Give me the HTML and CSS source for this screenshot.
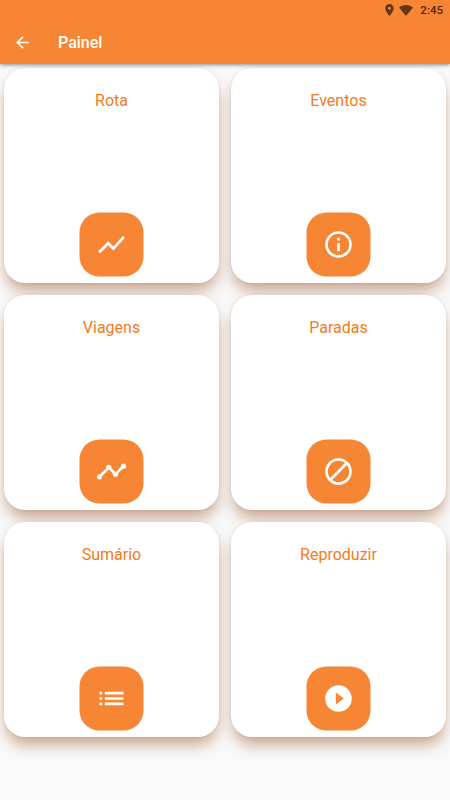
FILE: index.html
```html
<!DOCTYPE html>
<html lang="pt">
<head>
    <meta charset="UTF-8">
    <meta name="viewport" content="width=device-width, initial-scale=1.0">
    <title>Painel</title>
    <link rel="stylesheet" href="styles.css">
</head>
<body>
    <header class="app-header">
        <div class="status-bar">
            <svg class="status-pin" viewBox="5 2 14 20"><path d="M12 2C8.130 2 5 5.130 5 9c0 5.250 7 13 7 13s7-7.750 7-13c0-3.870-3.130-7-7-7zm0 9.500a2.500 2.500 0 0 1 0-5 2.500 2.500 0 0 1 0 5z"/></svg>
            <svg class="status-wifi" viewBox="0 0 14 11"><path d="M7 11L0 2.400C1.800.9 4.200 0 7 0s5.200.9 7 2.400z"/></svg>
            <span class="status-time">2:45</span>
        </div>
        <div class="toolbar">
            <a href="#" class="back-button" aria-label="Voltar">
                <svg viewBox="0 0 24 24"><path d="M20 11H7.830l5.590-5.590L12 4l-8 8 8 8 1.410-1.410L7.830 13H20v-2z"/></svg>
            </a>
            <h1 class="toolbar-title">Painel</h1>
        </div>
    </header>

    <main class="card-grid">
        <div class="card">
            <div class="card-title">Rota</div>
            <div class="card-icon">
                <svg viewBox="0 0 24 24"><path d="M3.500 18.490l6-6.010 4 4L22 6.920l-1.410-1.410-7.090 7.970-4-4L2 16.990z"/></svg>
            </div>
        </div>
        <div class="card">
            <div class="card-title">Eventos</div>
            <div class="card-icon">
                <svg viewBox="0 0 24 24"><path d="M11 7h2v2h-2zm0 4h2v6h-2zm1-9C6.480 2 2 6.480 2 12s4.480 10 10 10 10-4.480 10-10S17.520 2 12 2zm0 18c-4.410 0-8-3.590-8-8s3.590-8 8-8 8 3.590 8 8-3.590 8-8 8z"/></svg>
            </div>
        </div>
        <div class="card">
            <div class="card-title">Viagens</div>
            <div class="card-icon">
                <svg viewBox="0 0 24 24"><path d="M23 8c0 1.100-.9 2-2 2-.18 0-.35-.02-.51-.07l-3.560 3.550c.05.16.07.34.07.52 0 1.100-.9 2-2 2s-2-.9-2-2c0-.18.02-.36.07-.52l-2.550-2.550c-.16.05-.34.07-.52.07s-.36-.02-.52-.07l-4.550 4.560c.05.16.07.33.07.51 0 1.100-.9 2-2 2s-2-.9-2-2 .9-2 2-2c.18 0 .35.02.51.07l4.560-4.550C8.020 9.360 8 9.180 8 9c0-1.100.9-2 2-2s2 .9 2 2c0 .18-.02.36-.07.52l2.550 2.550c.16-.05.34-.07.52-.07s.36.02.52.07l3.550-3.560C19.020 8.350 19 8.180 19 8c0-1.100.9-2 2-2s2 .9 2 2z"/></svg>
            </div>
        </div>
        <div class="card">
            <div class="card-title">Paradas</div>
            <div class="card-icon">
                <svg class="line-icon" viewBox="0 0 24 24"><circle cx="12" cy="12" r="9"/><path d="M5.650 18.350l12.700-12.700"/></svg>
            </div>
        </div>
        <div class="card">
            <div class="card-title">Sumário</div>
            <div class="card-icon">
                <svg viewBox="0 0 24 24"><path d="M3 13h2v-2H3v2zm0 4h2v-2H3v2zm0-8h2V7H3v2zm4 4h14v-2H7v2zm0 4h14v-2H7v2zM7 7v2h14V7H7z"/></svg>
            </div>
        </div>
        <div class="card">
            <div class="card-title">Reproduzir</div>
            <div class="card-icon">
                <svg viewBox="0 0 24 24"><path d="M12 2C6.480 2 2 6.480 2 12s4.480 10 10 10 10-4.480 10-10S17.520 2 12 2zm-2 14.500v-9l6 4.500-6 4.500z"/></svg>
            </div>
        </div>
    </main>
</body>
</html>
```
FILE: styles.css
```css
* {
    box-sizing: border-box;
}

body {
    margin: 0;
    min-height: 100vh;
    background: #fafafa;
    font-family: Roboto, sans-serif;
}

.app-header {
    position: relative;
    z-index: 1;
    height: 64px;
    background: #f68633;
    box-shadow: 0 1px 4px rgba(0,0,0,0.45);
}

.status-bar {
    display: flex;
    align-items: center;
    justify-content: flex-end;
    height: 20px;
    padding-right: 7px;
}

.status-bar svg {
    display: block;
    fill: #633615;
}

.status-pin {
    width: 9px;
    height: 12px;
    margin-right: 5px;
}

.status-wifi {
    width: 14px;
    height: 11px;
    margin-right: 7px;
}

.status-time {
    font-size: 11.5px;
    font-weight: 500;
    line-height: 20px;
    color: #4d2a10;
}

.toolbar {
    display: flex;
    align-items: center;
    height: 44px;
    padding-left: 13px;
}

.back-button {
    display: block;
    width: 19px;
    height: 19px;
    margin-right: 26px;
}

.back-button svg {
    display: block;
    fill: #fff;
}

.toolbar-title {
    margin: 0;
    font-size: 16px;
    font-weight: 500;
    color: #fff;
}

.card-grid {
    display: grid;
    grid-template-columns: 215px 215px;
    grid-auto-rows: 215px;
    gap: 12px;
    padding: 4px;
}

.card {
    display: flex;
    flex-direction: column;
    align-items: center;
    justify-content: space-between;
    padding: 23px 0 7px;
    background: #fff;
    border-radius: 21px;
    box-shadow: 0 10px 16px -3px rgba(146,70,22,0.5), 0 0 3px rgba(146,70,22,0.12);
}

.card-title {
    font-size: 16px;
    line-height: 20px;
    color: #f47a1c;
}

.card-icon {
    display: flex;
    align-items: center;
    justify-content: center;
    width: 64px;
    height: 64px;
    background: #f68633;
    border-radius: 20px;
    transform: translate(-0.5px, 0.5px);
}

.card-icon svg {
    width: 32px;
    height: 32px;
    fill: #fff;
}

.card-icon .line-icon {
    fill: none;
    stroke: #fff;
    stroke-width: 2;
}
```
